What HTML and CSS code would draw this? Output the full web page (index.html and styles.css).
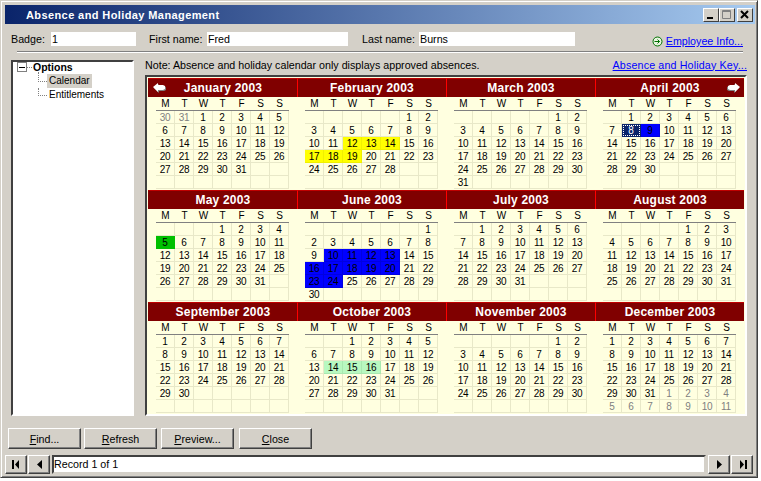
FILE: index.html
```html
<!DOCTYPE html>
<html lang="en">
<head>
    <meta charset="UTF-8">
    <title>Absence and Holiday Management</title>
    <link rel="stylesheet" href="styles.css">
</head>
<body>

<div class="window">
    <div class="titlebar">
        <span class="title">Absence and Holiday Management</span>
        <div class="window-buttons">
            <button class="win-btn"><svg width="10" height="10" viewBox="0 0 10 10"><rect x="1" y="7" width="6" height="2" fill="#000"/></svg></button>
            <button class="win-btn"><svg width="10" height="10" viewBox="0 0 10 10"><path d="M0.5 0.5h8v8h-8z M0.5 1.5h8" fill="none" stroke="#808080"/></svg></button>
            <button class="win-btn close-btn"><svg width="10" height="10" viewBox="0 0 10 10"><path d="M1 1l7 7M8 1l-7 7" fill="none" stroke="#000" stroke-width="2"/></svg></button>
        </div>
    </div>

    <div class="employee-row">
        <label class="field-label badge-label">Badge:</label>
        <div class="field badge-field">1</div>
        <label class="field-label first-label">First name:</label>
        <div class="field first-field">Fred</div>
        <label class="field-label last-label">Last name:</label>
        <div class="field last-field">Burns</div>
        <a class="link employee-link" href="#">
            <svg width="11" height="11" viewBox="0 0 11 11"><circle cx="5.5" cy="5.5" r="4.5" fill="#e8f4e0" stroke="#007000" stroke-width="1"/><path d="M2.5 5.5h5M5.5 3.5l2 2-2 2" fill="none" stroke="#007000"/></svg>
            <span>Employee Info...</span>
        </a>
    </div>
    <div class="divider"></div>

    <div class="main">
        <div class="tree">
            <div class="tree-root">
                <span class="expander"></span>
                <span class="tree-dots"></span>
                <b>Options</b>
            </div>
            <div class="tree-child tree-first"><span class="selected">Calendar</span></div>
            <div class="tree-child"><span>Entitlements</span></div>
        </div>
        <div class="content">
            <div class="note-row">
                <span>Note: Absence and holiday calendar only displays approved absences.</span>
                <a class="link key-link" href="#">Absence and Holiday Key...</a>
            </div>
            <div class="calendar-panel">
                <div class="year" id="year"></div>
            </div>
        </div>
    </div>

    <div class="actions">
        <button class="action-btn find-btn"><u>F</u>ind...</button>
        <button class="action-btn"><u>R</u>efresh</button>
        <button class="action-btn preview-btn"><u>P</u>review...</button>
        <button class="action-btn"><u>C</u>lose</button>
    </div>

    <div class="record-nav">
        <button class="nav-btn"><svg width="9" height="9" viewBox="0 0 9 9"><path d="M0 0h2v9H0zM7 0v9L3 4.5z"/></svg></button>
        <button class="nav-btn"><svg width="9" height="9" viewBox="0 0 9 9"><path d="M7 0v9L2 4.5z"/></svg></button>
        <div class="record-box">Record 1 of 1</div>
        <button class="nav-btn"><svg width="9" height="9" viewBox="0 0 9 9"><path d="M2 0v9l5-4.5z"/></svg></button>
        <button class="nav-btn"><svg width="9" height="9" viewBox="0 0 9 9"><path d="M2 0v9l4-4.5zM7 0h2v9H7z"/></svg></button>
    </div>
</div>

<script src="script.js"></script>
</body>
</html>
```

FILE: styles.css
```css
* {
    box-sizing: border-box;
}
body {
    margin: 0;
    width: 761px;
    height: 481px;
    background-color: #fff;
    font-family: "Liberation Sans", Arial, sans-serif;
    font-size: 10.7px;
    color: #000;
    overflow: hidden;
}
button {
    font-family: inherit;
    font-size: inherit;
    color: inherit;
    padding: 0;
}
.window {
    width: 758px;
    height: 478px;
    background-color: #d4d0c8;
    border: 1px solid #404040;
    border-top-color: #d4d0c8;
    border-left-color: #d4d0c8;
    box-shadow: inset 1px 1px 0 #fff, inset -1px -1px 0 #808080;
    padding: 4px 2px 0 4px;
    display: flex;
    flex-direction: column;
}
.titlebar {
    height: 19px;
    flex: none;
    background: linear-gradient(to right, #0a246a, #a6caf0);
    display: flex;
    align-items: center;
    justify-content: space-between;
    padding: 0 2px 0 21px;
}
.title {
    color: #fff;
    font-weight: bold;
    font-size: 11px;
    letter-spacing: 0.4px;
}
.window-buttons {
    display: flex;
}
.win-btn {
    width: 16px;
    height: 14px;
    background-color: #d4d0c8;
    border: 1px solid;
    border-color: #fff #404040 #404040 #fff;
    display: flex;
    align-items: center;
    justify-content: center;
}
.close-btn {
    margin-left: 2px;
}
.employee-row {
    display: flex;
    align-items: center;
    height: 16px;
    margin-top: 7px;
    padding-left: 6px;
    flex: none;
}
.field {
    height: 14px;
    background-color: #fff;
    padding-left: 1px;
    line-height: 14px;
}
.badge-label {
    width: 40px;
}
.badge-field {
    width: 85px;
}
.first-label {
    width: 58px;
    margin-left: 13px;
}
.first-field {
    width: 141px;
}
.last-label {
    width: 57px;
    margin-left: 14px;
}
.last-field {
    width: 156px;
}
.link {
    color: #0000ff;
    text-decoration: underline;
}
.key-link {
    letter-spacing: 0.15px;
}
.employee-link {
    margin-left: auto;
    margin-right: 12px;
    padding-top: 4px;
    display: flex;
    align-items: center;
    gap: 3px;
}
.divider {
    height: 2px;
    flex: none;
    margin: 4px 12px 0 12px;
    background-color: #808080;
    border-bottom: 1px solid #fff;
}
.main {
    display: flex;
    margin-top: 4px;
    flex: none;
}
.tree {
    width: 123px;
    height: 356px;
    margin: 3px 0 0 6px;
    background-color: #fff;
    border: 2px solid;
    border-color: #404040 #fff #fff #404040;
    padding: 0 0 0 4px;
    font-size: 10px;
}
.tree-root {
    display: flex;
    align-items: center;
    height: 10px;
    margin-bottom: 2px;
}
.expander {
    width: 10px;
    height: 10px;
    border: 1px solid #808080;
    background: linear-gradient(#000, #000) center / 6px 1px no-repeat;
}
.tree-dots {
    width: 5px;
    margin-right: 1px;
    border-top: 1px dotted #808080;
}
.tree-root b {
    font-size: 10.5px;
}
.tree-child {
    height: 14px;
    margin-left: 21px;
    padding-left: 9px;
    display: flex;
    align-items: center;
    position: relative;
}
.tree-child span {
    padding: 0 2px;
    line-height: 14px;
}
.tree-child::before {
    content: "";
    position: absolute;
    left: 0;
    top: 0;
    width: 8px;
    height: 7px;
    border-left: 1px dotted #808080;
    border-bottom: 1px dotted #808080;
}
.tree-first::before {
    top: -2px;
    height: 9px;
}
.selected {
    background-color: #d4d0c8;
}
.content {
    width: 602px;
    margin-left: 11px;
}
.note-row {
    height: 15px;
    display: flex;
    justify-content: space-between;
    align-items: center;
}
.calendar-panel {
    height: 341px;
    margin-top: 3px;
    background-color: #ffffe0;
    border: 2px solid;
    border-color: #404040 #fff #fff #404040;
    padding: 1px 1px 0 1px;
}
.year {
    display: grid;
    grid-template-columns: repeat(4, 149px);
    grid-auto-rows: 112px;
}
.month-title {
    height: 19px;
    background-color: #800000;
    color: #fff;
    font-weight: bold;
    font-size: 12px;
    letter-spacing: 0.2px;
    text-align: center;
    line-height: 18px;
    border-top: 1px solid #c00000;
    border-left: 1px solid #ff0000;
    position: relative;
}
.month:nth-child(4n+1) .month-title {
    border-left-color: #800000;
}
.month-arrow {
    position: absolute;
    top: 3px;
}
.arrow-prev {
    left: 4px;
}
.arrow-next {
    right: 3px;
}
.weekdays,
.days {
    display: grid;
    grid-template-columns: repeat(7, 19px);
    width: 133px;
    margin-left: 8px;
    font-size: 10px;
}
.weekdays {
    height: 14px;
    border-bottom: 1px solid #808080;
    line-height: 14px;
    text-align: center;
}
.days {
    grid-auto-rows: 13px;
}
.day {
    border-right: 1px solid #e8e8c8;
    border-bottom: 1px solid #e8e8c8;
    text-align: center;
    line-height: 13px;
    letter-spacing: -0.2px;
}
.other-month {
    color: #808080;
}
.holiday {
    background-color: #ffff00;
    border-color: #f0f000;
}
.absence {
    background-color: #0000ff;
    border-color: #0000e0;
}
.sick {
    background-color: #00c000;
    border-color: #00c000;
}
.pending {
    background-color: #b8f8c0;
    border-color: #a8e8b0;
}
.today {
    background-color: #0a246a;
    color: #fff;
    outline: 1px dotted #fff;
    outline-offset: -2px;
    border-color: #0a246a;
}
.actions {
    display: flex;
    margin-top: 12px;
    padding-left: 3px;
    flex: none;
}
.action-btn {
    width: 73px;
    height: 21px;
    margin-right: 4px;
    background-color: #d4d0c8;
    border: 1px solid;
    border-color: #fff #404040 #404040 #fff;
    box-shadow: inset -1px -1px 0 #808080;
}
.find-btn {
    margin-right: 3px;
}
.preview-btn {
    margin-right: 5px;
}
.record-nav {
    display: flex;
    margin-top: 6px;
    margin-right: 2px;
    flex: none;
    height: 19px;
    gap: 1px;
}
.nav-btn {
    width: 22px;
    height: 19px;
    flex: none;
    background-color: #d4d0c8;
    border: 1px solid;
    border-color: #fff #404040 #404040 #fff;
    box-shadow: inset -1px -1px 0 #808080;
    display: flex;
    align-items: center;
    justify-content: center;
}
.record-box {
    flex: 1;
    height: 19px;
    margin: 0 1px;
    background-color: #fff;
    border: 2px solid;
    border-color: #404040 #d4d0c8 #d4d0c8 #404040;
    line-height: 15px;
}
```

FILE: script.js
```js
const monthNames = ['January', 'February', 'March', 'April', 'May', 'June', 'July',
    'August', 'September', 'October', 'November', 'December'];
const weekdayLetters = ['M', 'T', 'W', 'T', 'F', 'S', 'S'];

// month index -> day -> class
const marked = {
    1: { 12: 'holiday', 13: 'holiday', 14: 'holiday', 17: 'holiday', 18: 'holiday', 19: 'holiday' },
    3: { 8: 'today', 9: 'absence' },
    4: { 5: 'sick' },
    5: { 10: 'absence', 11: 'absence', 12: 'absence', 13: 'absence', 16: 'absence', 17: 'absence',
         18: 'absence', 19: 'absence', 20: 'absence', 23: 'absence', 24: 'absence' },
    9: { 14: 'pending', 15: 'pending', 16: 'pending' }
};

function addDay(parent, text, className) {
    const day = document.createElement('div');
    day.className = 'day' + (className ? ' ' + className : '');
    day.textContent = text;
    parent.appendChild(day);
}

const arrowPath = 'M0 5l5-4v2h5l2 1v3l-2 1H5v2z';

function buildMonth(index) {
    const month = document.createElement('div');
    month.className = 'month';

    const title = document.createElement('div');
    title.className = 'month-title';
    title.textContent = monthNames[index] + ' 2003';
    month.appendChild(title);

    if (index === 0 || index === 3) {
        const flip = index === 3 ? ' transform="matrix(-1 0 0 1 13 0)"' : '';
        title.insertAdjacentHTML('beforeend',
            '<svg class="month-arrow ' + (index === 0 ? 'arrow-prev' : 'arrow-next') + '" width="14" height="12" viewBox="0 0 14 12">' +
            '<g' + flip + '><path d="' + arrowPath + '" transform="translate(1 1)" fill="#808080"/>' +
            '<path d="' + arrowPath + '" fill="#fff"/></g></svg>');
    }

    const weekdays = document.createElement('div');
    weekdays.className = 'weekdays';
    weekdayLetters.forEach(function(letter) {
        const cell = document.createElement('div');
        cell.textContent = letter;
        weekdays.appendChild(cell);
    });
    month.appendChild(weekdays);

    const days = document.createElement('div');
    days.className = 'days';
    const lead = (new Date(2003, index, 1).getDay() + 6) % 7;
    const total = new Date(2003, index + 1, 0).getDate();
    const prevTotal = new Date(2003, index, 0).getDate();

    for (let i = 0; i < 42; i++) {
        const dayNum = i - lead + 1;
        if (dayNum < 1) {
            if (index === 0) addDay(days, prevTotal + dayNum, 'other-month');
            else addDay(days, '');
        } else if (dayNum > total) {
            if (index === 11) addDay(days, dayNum - total, 'other-month');
            else addDay(days, '');
        } else {
            addDay(days, dayNum, marked[index] && marked[index][dayNum]);
        }
    }
    month.appendChild(days);
    return month;
}

const year = document.getElementById('year');
for (let m = 0; m < 12; m++) {
    year.appendChild(buildMonth(m));
}
```
